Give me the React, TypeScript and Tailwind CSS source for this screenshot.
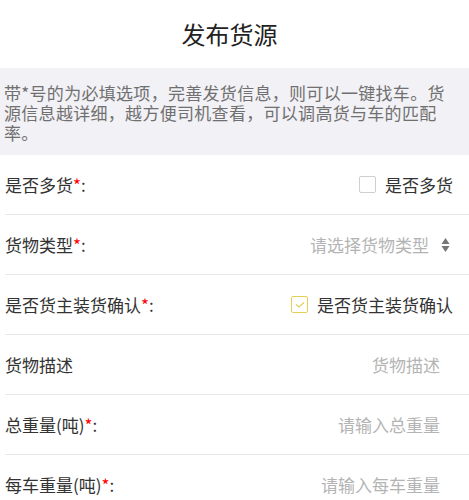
import { ReactNode } from 'react'

const font = { fontFamily: '"Noto Sans CJK SC", "Noto Sans", sans-serif' }

function Label({ text, required }: { text: string; required?: boolean }) {
  return (
    <span className="text-[17px] text-[#333]">
      {text}
      {required && <span className="text-[#f00]">*</span>}
      {required && ':'}
    </span>
  )
}

function Row({ children, last }: { children: ReactNode; last?: boolean }) {
  return (
    <div className={`ml-[5px] flex h-[60px] items-center justify-between ${last ? '' : 'border-b border-[#e8e8e8]'}`}>
      {children}
    </div>
  )
}

function Check({ checked, text }: { checked?: boolean; text: string }) {
  return (
    <div className="mr-[16px] flex items-center gap-[9px]">
      <span
        className={`flex h-[17px] w-[17px] items-center justify-center rounded-[2px] border ${
          checked ? 'border-[#e5cf55]' : 'border-[#cfcfcf]'
        }`}
      >
        {checked && (
          <svg width="10" height="8" viewBox="0 0 10 8" fill="none">
            <path d="M1 3.5 L4 6 L9 1.5" stroke="#e5cf55" strokeWidth="1.2" />
          </svg>
        )}
      </span>
      <span className="text-[17px] text-[#333]">{text}</span>
    </div>
  )
}

function Placeholder({ text }: { text: string }) {
  return <span className="mr-[29px] text-[17px] text-[#b4b4b4]">{text}</span>
}

export default function App() {
  return (
    <div className="h-[500px] w-[469px] overflow-hidden bg-white" style={font}>
      <div className="flex h-[68px] items-center justify-center pr-[10px]">
        <h1 className="text-[24px] text-[#222]">发布货源</h1>
      </div>
      <div className="h-[87px] bg-[#f2f1f6] pb-[12px] pl-[4px] pr-[19px] pt-[15px] text-[17px] leading-[20px] tracking-[0.3px] text-[#707070]">
        带*号的为必填选项，完善发货信息，则可以一键找车。货源信息越详细，越方便司机查看，可以调高货与车的匹配率。
      </div>
      <Row>
        <Label text="是否多货" required />
        <Check text="是否多货" />
      </Row>
      <Row>
        <Label text="货物类型" required />
        <div className="mr-[19px] flex items-center gap-[12px]">
          <span className="text-[17px] text-[#b4b4b4]">请选择货物类型</span>
          <svg width="9" height="16" viewBox="0 0 9 16">
            <path d="M4.5 1 L8.5 7 L0.5 7 Z" fill="#777" />
            <path d="M4.5 15 L8.5 9 L0.5 9 Z" fill="#777" />
          </svg>
        </div>
      </Row>
      <Row>
        <Label text="是否货主装货确认" required />
        <Check checked text="是否货主装货确认" />
      </Row>
      <Row>
        <Label text="货物描述" />
        <Placeholder text="货物描述" />
      </Row>
      <Row>
        <Label text="总重量(吨)" required />
        <Placeholder text="请输入总重量" />
      </Row>
      <Row last>
        <Label text="每车重量(吨)" required />
        <Placeholder text="请输入每车重量" />
      </Row>
    </div>
  )
}
